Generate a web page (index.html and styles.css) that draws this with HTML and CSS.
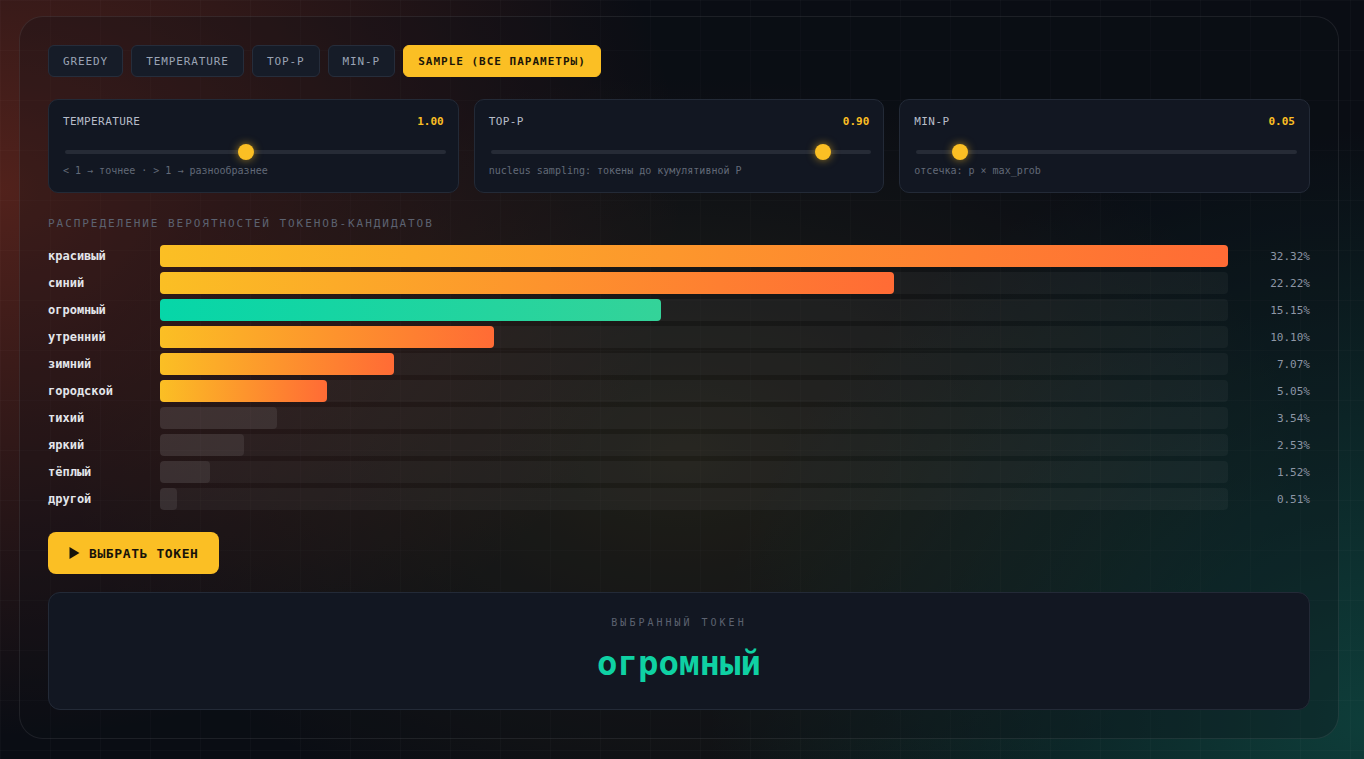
FILE: index.html
```html
<!DOCTYPE html>
<html lang="ru">
<head>
    <meta charset="UTF-8">
    <meta name="viewport" content="width=device-width, initial-scale=1.0">
    <title>Сэмплирование токенов</title>
    <link rel="stylesheet" href="styles.css">
</head>
<body>
    <div class="panel">
        <div class="tabs">
            <button class="tab">GREEDY</button>
            <button class="tab">TEMPERATURE</button>
            <button class="tab">TOP-P</button>
            <button class="tab">MIN-P</button>
            <button class="tab active">SAMPLE (ВСЕ ПАРАМЕТРЫ)</button>
        </div>

        <div class="controls">
            <div class="control">
                <div class="control-head">
                    <span class="control-name">TEMPERATURE</span>
                    <span class="control-value">1.00</span>
                </div>
                <div class="slider">
                    <div class="track"></div>
                    <div class="thumb" style="left: 47.5%"></div>
                </div>
                <div class="hint">&lt; 1 → точнее · &gt; 1 → разнообразнее</div>
            </div>
            <div class="control">
                <div class="control-head">
                    <span class="control-name">TOP-P</span>
                    <span class="control-value">0.90</span>
                </div>
                <div class="slider">
                    <div class="track"></div>
                    <div class="thumb" style="left: 87.4%"></div>
                </div>
                <div class="hint">nucleus sampling: токены до кумулятивной P</div>
            </div>
            <div class="control">
                <div class="control-head">
                    <span class="control-name">MIN-P</span>
                    <span class="control-value">0.05</span>
                </div>
                <div class="slider">
                    <div class="track"></div>
                    <div class="thumb" style="left: 11.5%"></div>
                </div>
                <div class="hint">отсечка: p × max_prob</div>
            </div>
        </div>

        <div class="section-title">РАСПРЕДЕЛЕНИЕ ВЕРОЯТНОСТЕЙ ТОКЕНОВ-КАНДИДАТОВ</div>

        <div class="dist">
            <div class="row">
                <span class="token">красивый</span>
                <div class="bar"><div class="fill" style="width: 100%"></div></div>
                <span class="pct">32.32%</span>
            </div>
            <div class="row">
                <span class="token">синий</span>
                <div class="bar"><div class="fill" style="width: 68.75%"></div></div>
                <span class="pct">22.22%</span>
            </div>
            <div class="row">
                <span class="token">огромный</span>
                <div class="bar"><div class="fill picked" style="width: 46.88%"></div></div>
                <span class="pct">15.15%</span>
            </div>
            <div class="row">
                <span class="token">утренний</span>
                <div class="bar"><div class="fill" style="width: 31.25%"></div></div>
                <span class="pct">10.10%</span>
            </div>
            <div class="row">
                <span class="token">зимний</span>
                <div class="bar"><div class="fill" style="width: 21.88%"></div></div>
                <span class="pct">7.07%</span>
            </div>
            <div class="row">
                <span class="token">городской</span>
                <div class="bar"><div class="fill" style="width: 15.63%"></div></div>
                <span class="pct">5.05%</span>
            </div>
            <div class="row">
                <span class="token">тихий</span>
                <div class="bar"><div class="fill cut" style="width: 10.95%"></div></div>
                <span class="pct">3.54%</span>
            </div>
            <div class="row">
                <span class="token">яркий</span>
                <div class="bar"><div class="fill cut" style="width: 7.83%"></div></div>
                <span class="pct">2.53%</span>
            </div>
            <div class="row">
                <span class="token">тёплый</span>
                <div class="bar"><div class="fill cut" style="width: 4.70%"></div></div>
                <span class="pct">1.52%</span>
            </div>
            <div class="row">
                <span class="token">другой</span>
                <div class="bar"><div class="fill cut" style="width: 1.58%"></div></div>
                <span class="pct">0.51%</span>
            </div>
        </div>

        <div class="actions">
            <button class="pick-btn">
                <svg class="play" viewBox="0 0 10 12" width="11" height="12"><path d="M0 0 L10 6 L0 12 Z" fill="currentColor"/></svg>
                ВЫБРАТЬ ТОКЕН
            </button>
        </div>

        <div class="result">
            <div class="result-label">ВЫБРАННЫЙ ТОКЕН</div>
            <div class="result-token">огромный</div>
        </div>
    </div>
</body>
</html>
```

FILE: styles.css
```css
* {
    box-sizing: border-box;
}
html, body {
    height: 100%;
}
body {
    margin: 0;
    padding: 16px 0 0 19px;
    font-family: 'DejaVu Sans Mono', 'Liberation Mono', monospace;
    color: #e5e7eb;
    background-color: #0a0d14;
    background-image:
        linear-gradient(rgba(255, 255, 255, 0.02) 1px, transparent 1px),
        linear-gradient(90deg, rgba(255, 255, 255, 0.02) 1px, transparent 1px),
        radial-gradient(ellipse 50% 72% at 0% 25%, rgba(125, 46, 32, 0.62), transparent 100%),
        radial-gradient(ellipse 48% 78% at 100% 95%, rgba(18, 108, 94, 0.5), transparent 100%),
        radial-gradient(ellipse 45% 50% at 50% 60%, rgba(125, 105, 40, 0.26), transparent 100%);
    background-size: 50px 50px, 50px 50px, 100% 100%, 100% 100%, 100% 100%;
}
.panel {
    width: 1320px;
    height: 723px;
    padding: 28px;
    border: 1px solid rgba(255, 255, 255, 0.08);
    border-radius: 24px;
    background: rgba(14, 17, 24, 0.3);
    display: flex;
    flex-direction: column;
}
button {
    font-family: inherit;
    cursor: pointer;
}
.tabs {
    display: flex;
    gap: 8px;
    margin-bottom: 22px;
}
.tab {
    height: 32px;
    padding: 0 14px;
    font-size: 11px;
    letter-spacing: 0.9px;
    color: #9aa3b4;
    background: #161c28;
    border: 1px solid #262d3b;
    border-radius: 6px;
}
.tab.active {
    background: #fbbf24;
    border-color: #fbbf24;
    color: #1a1408;
    font-weight: bold;
    letter-spacing: 1px;
}
.controls {
    display: grid;
    grid-template-columns: repeat(3, 1fr);
    gap: 15px;
    margin-bottom: 24px;
}
.control {
    background: #121722;
    border: 1px solid #232a37;
    border-radius: 10px;
    padding: 13px 14px 14px;
}
.control-head {
    display: flex;
    justify-content: space-between;
    align-items: center;
    height: 16px;
    font-size: 11px;
}
.control-name {
    color: #b7bdc9;
    letter-spacing: 0.4px;
}
.control-value {
    color: #fbbf24;
    font-weight: bold;
}
.slider {
    position: relative;
    height: 20px;
    padding-top: 8px;
    margin: 13px -2px 2px 2px;
}
.track {
    height: 4px;
    border-radius: 2px;
    background: #262b36;
}
.thumb {
    position: absolute;
    top: 2px;
    width: 16px;
    height: 16px;
    margin-left: -8px;
    border-radius: 50%;
    background: #fbbf24;
    box-shadow: 0 0 8px rgba(251, 191, 36, 0.6);
}
.hint {
    font-size: 10px;
    line-height: 14px;
    color: #626a78;
}
.section-title {
    font-size: 11px;
    line-height: 14px;
    letter-spacing: 1.95px;
    color: #5c6270;
    margin-bottom: 14px;
}
.dist {
    display: flex;
    flex-direction: column;
    gap: 5px;
    margin-bottom: 22px;
}
.row {
    display: grid;
    grid-template-columns: 112px 1fr 82px;
    align-items: center;
    height: 22px;
}
.token {
    font-size: 12px;
    font-weight: bold;
    color: #e3e5ea;
}
.bar {
    height: 22px;
    border-radius: 4px;
    background: rgba(255, 255, 255, 0.04);
}
.fill {
    height: 100%;
    border-radius: 4px;
    background: linear-gradient(90deg, #fbbf24, #ff6b35);
}
.fill.picked {
    background: linear-gradient(90deg, #06d6a8, #34d399);
}
.fill.cut {
    background: rgba(255, 255, 255, 0.08);
}
.pct {
    text-align: right;
    font-size: 11px;
    color: #8d96a5;
}
.actions {
    margin-bottom: 18px;
}
.pick-btn {
    display: inline-flex;
    align-items: center;
    gap: 9px;
    height: 42px;
    padding: 0 20px 0 21px;
    border: none;
    border-radius: 8px;
    background: #fbbf24;
    color: #17130a;
    font-size: 13px;
    font-weight: bold;
    letter-spacing: 0.6px;
}
.play {
    display: block;
}
.result {
    flex: 1;
    background: #121722;
    border: 1px solid #232a37;
    border-radius: 12px;
    display: flex;
    flex-direction: column;
    align-items: center;
    padding-top: 24px;
}
.result-label {
    font-size: 10px;
    letter-spacing: 3px;
    color: #5c6270;
    margin-bottom: 15px;
}
.result-token {
    font-size: 34px;
    font-weight: bold;
    color: #0fd1a3;
    line-height: 40px;
}
```
